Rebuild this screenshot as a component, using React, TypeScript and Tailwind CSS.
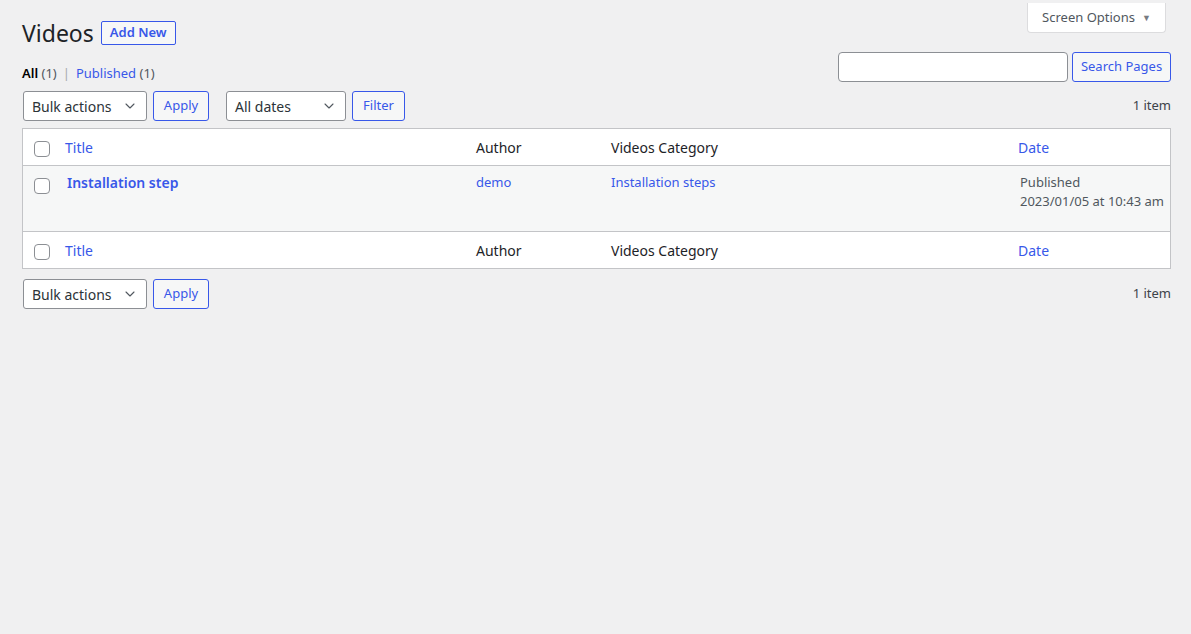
import { ChevronDown } from "lucide-react";

const SelectBox = ({ label, width }: { label: string; width: string }) => {
  return (
    <div
      className={`${width} h-[30px] flex items-center justify-between pl-2 pr-2 bg-white border border-[#8c8f94] rounded-[3px] text-[14px] text-[#2c3338]`}
    >
      <span>{label}</span>
      <ChevronDown size={16} strokeWidth={1.6} className="text-[#50575e]" />
    </div>
  );
};

const SecondaryButton = ({ label, width }: { label: string; width: string }) => {
  return (
    <button
      className={`${width} h-[30px] flex items-center justify-center bg-[#f6f7f7] border border-[#3858e9] rounded-[3px] text-[13px] text-[#3858e9]`}
    >
      {label}
    </button>
  );
};

const CheckBox = () => (
  <span className="block w-4 h-4 bg-white border border-[#8c8f94] rounded-[4px]" />
);

const HeadRow = ({ border }: { border: string }) => (
  <div className={`flex h-[37px] items-center bg-white text-[14px] ${border}`}>
    <div className="w-[42px] pl-[11px] pt-[3px]">
      <CheckBox />
    </div>
    <div className="w-[411px] text-[#3858e9]">Title</div>
    <div className="w-[135px] text-[#1d2327]">Author</div>
    <div className="w-[407px] text-[#1d2327]">Videos Category</div>
    <div className="flex-1 text-[#3858e9]">Date</div>
  </div>
);

export default function App() {
  return (
    <div
      className="min-h-[634px] w-full bg-[#f0f0f1] text-[13px] text-[#3c434a]"
      style={{ fontFamily: '"Noto Sans", "Open Sans", sans-serif' }}
    >
      <div className="pl-[22px] pr-[20px]">
        {/* top bar with screen options */}
        <div className="flex justify-end pr-[5px]">
          <button className="mt-[3px] w-[139px] h-[30px] flex items-center justify-center gap-[7px] bg-white border border-[#dcdcde] border-t-0 rounded-b-[4px] text-[13px] text-[#50575e] -mb-[33px]">
            Screen Options
            <span className="text-[9px] text-[#787c82]">▼</span>
          </button>
        </div>

        <div className="flex items-center gap-[7px] pt-[19px]">
          <h1 className="text-[23px] text-[#1d2327] leading-[28px]">Videos</h1>
          <button className="h-[24px] px-[8px] bg-[#f6f7f7] border border-[#3858e9] rounded-[2px] text-[13px] font-semibold text-[#3858e9]">
            Add New
          </button>
        </div>

        <div className="flex h-[36px] items-start justify-between -mt-[1px]">
          <div className="pt-[18px] text-[13px] leading-[18px]">
            <span className="font-semibold text-black">All</span>{" "}
            <span className="text-[#50575e]">(1)</span>
            <span className="mx-[6px] text-[#a7aaad]">|</span>
            <span className="text-[#3858e9]">Published</span>{" "}
            <span className="text-[#50575e]">(1)</span>
          </div>
          <div className="flex gap-[4px] pt-[6px]">
            <div className="w-[230px] h-[30px] bg-white border border-[#8c8f94] rounded-[4px]" />
            <SecondaryButton label="Search Pages" width="w-[99px]" />
          </div>
        </div>

        <div className="flex items-center justify-between mt-[9px] pl-[1px]">
          <div className="flex items-center">
            <SelectBox label="Bulk actions" width="w-[124px]" />
            <div className="ml-[6px]">
              <SecondaryButton label="Apply" width="w-[56px]" />
            </div>
            <div className="ml-[17px]">
              <SelectBox label="All dates" width="w-[120px]" />
            </div>
            <div className="ml-[6px]">
              <SecondaryButton label="Filter" width="w-[53px]" />
            </div>
          </div>
          <span className="text-[13px] text-[#3c434a]">1 item</span>
        </div>

        <div className="mt-[7px] border border-[#c3c4c7]">
          <HeadRow border="border-b border-[#c3c4c7]" />
          <div className="flex h-[65px] bg-[#f6f7f7] text-[13px]">
            <div className="w-[42px] pl-[11px] pt-[12px]">
              <CheckBox />
            </div>
            <div className="w-[411px] pt-[6px] pl-[2px] text-[14px] font-semibold text-[#3858e9]">
              Installation step
            </div>
            <div className="w-[135px] pt-[7px] text-[#3858e9]">demo</div>
            <div className="w-[407px] pt-[7px] text-[#3858e9]">Installation steps</div>
            <div className="flex-1 pt-[7px] pl-[2px] leading-[19px] text-[#50575e]">
              <div>Published</div>
              <div>2023/01/05 at 10:43 am</div>
            </div>
          </div>
          <HeadRow border="border-t border-[#c3c4c7]" />
        </div>

        <div className="flex items-center justify-between mt-[10px] pl-[1px]">
          <div className="flex items-center">
            <SelectBox label="Bulk actions" width="w-[124px]" />
            <div className="ml-[6px]">
              <SecondaryButton label="Apply" width="w-[56px]" />
            </div>
          </div>
          <span className="text-[13px] text-[#3c434a]">1 item</span>
        </div>
      </div>
    </div>
  );
}
